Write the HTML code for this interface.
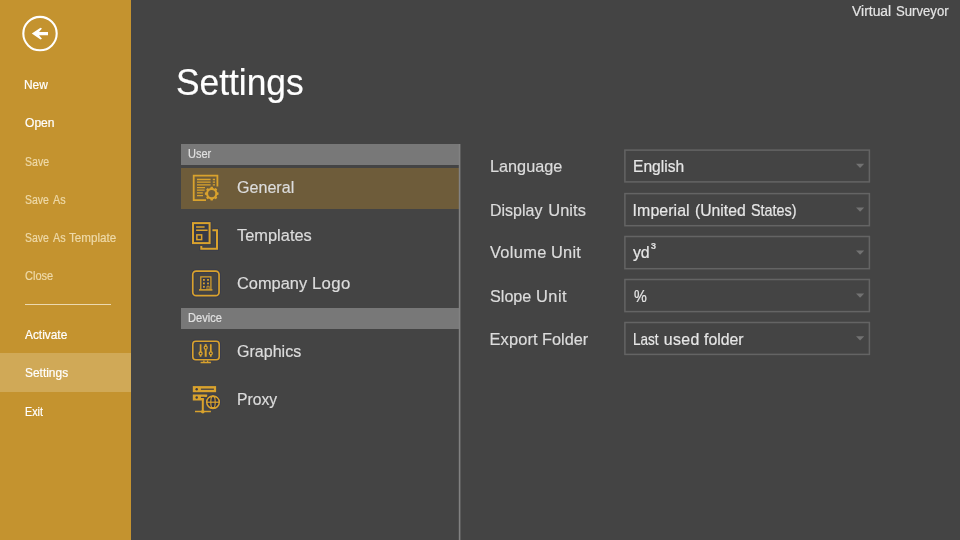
<!DOCTYPE html>
<html><head><meta charset="utf-8"><title>Settings</title>
<style>
html,body{margin:0;padding:0;}
body{width:960px;height:540px;overflow:hidden;background:#444444;position:relative;font-family:"Liberation Sans",sans-serif;color:#e6e6e6;}
.abs{position:absolute;}
#side{position:absolute;left:0;top:0;width:131px;height:540px;background:#c4932f;}
#selm{position:absolute;left:0;top:353px;width:131px;height:39px;background:#d0a957;}
#sep{position:absolute;left:25px;top:304px;width:86px;height:1px;background:#ecd9b0;}
.t{position:absolute;white-space:pre;height:20px;transform-origin:0 0;-webkit-text-stroke:0.2px currentColor;}
.t span{position:absolute;top:0;white-space:pre;transform-origin:0 0;}
.hdr{position:absolute;left:181px;width:279px;background:#787878;}
.sel{position:absolute;left:181px;top:168px;width:278px;height:41px;background:#6e5c3a;}
.t b{font-weight:normal;font-size:14.5px;line-height:0;position:relative;top:-5.2px;left:1.4px;-webkit-text-stroke:0.3px #e6e6e6}
#root{position:absolute;left:0;top:0;width:960px;height:540px;will-change:transform;}
</style></head><body><div id="root">
<div id="side"><div id="selm"></div><div id="sep"></div>
<svg class="abs" style="left:0;top:0" width="131" height="70" viewBox="0 0 131 70"><circle cx="40" cy="33.6" r="16.7" fill="none" stroke="#fff" stroke-width="2.1"/><path d="M31.8 33.6L40.5 27.8L42 28.5L39 31.95H48V35.25H39L42 38.7L40.5 39.4Z" fill="#fff"/></svg>
</div>
<div class="hdr" style="top:144px;height:21px"></div>
<div class="sel"></div>
<div class="hdr" style="top:308px;height:21px"></div>
<svg id="icons" class="abs" style="left:0;top:0" width="960" height="540" viewBox="0 0 960 540">
<g fill="none" stroke="#d9a22d">
<path d="M206 200.1H193.7V175.7H217.4V186.5" stroke-width="1.8"/>
<path d="M197 179.5H210.6M197 182.1H210.6M197 184.9H210.6M212.8 179.5H215M212.8 182.1H215M212.8 184.9H215M197 187.6H205M197 190.2H204.6M197 192.8H202.8M197 195.6H203" stroke-width="1.3"/>
</g>
<path d="M217.24 192.27 L218.52 192.52 L218.52 194.68 L217.24 194.93 L216.56 196.58 L217.28 197.66 L215.76 199.18 L214.68 198.46 L213.03 199.14 L212.78 200.42 L210.62 200.42 L210.37 199.14 L208.72 198.46 L207.64 199.18 L206.12 197.66 L206.84 196.58 L206.16 194.93 L204.88 194.68 L204.88 192.52 L206.16 192.27 L206.84 190.62 L206.12 189.54 L207.64 188.02 L208.72 188.74 L210.37 188.06 L210.62 186.78 L212.78 186.78 L213.03 188.06 L214.68 188.74 L215.76 188.02 L217.28 189.54 L216.56 190.62Z M215.30 193.60 A3.6 3.6 0 1 0 208.10 193.60 A3.6 3.6 0 1 0 215.30 193.60Z" fill="#d9a22d" fill-rule="evenodd"/>
<path d="M212.4 230.2H217V248.7H201.3V246" fill="none" stroke="#3a3c49" stroke-width="4"/>
<rect x="193" y="223.1" width="16.6" height="20" fill="none" stroke="#3a3c49" stroke-width="4"/>
<rect x="193" y="223.1" width="16.6" height="20" fill="#373a47" stroke="#d9a22d" stroke-width="2"/>
<path d="M212.4 230.2H217V248.7H201.3V246" fill="none" stroke="#d9a22d" stroke-width="2"/>
<path d="M196.1 227H204.6M196.1 230.2H207.6" fill="none" stroke="#d9a22d" stroke-width="1.5"/>
<rect x="196.85" y="234.85" width="4.8" height="4.8" fill="#373a47" stroke="#d9a22d" stroke-width="1.5"/>
<rect x="192.75" y="271.05" width="26.3" height="24.6" rx="3.4" fill="none" stroke="#3a3c49" stroke-width="3.7"/>
<rect x="192.75" y="271.05" width="26.3" height="24.6" rx="3.4" fill="none" stroke="#d9a22d" stroke-width="1.7"/>
<path d="M200.8 289.6V276.8H210.9V289.6" fill="#373a47" stroke="#d9a22d" stroke-width="1.2"/>
<path d="M199 289.9H212.4" fill="none" stroke="#d9a22d" stroke-width="1.5"/>
<g fill="#d9a22d"><rect x="203" y="279" width="1.8" height="1.8"/><rect x="207.1" y="279" width="1.8" height="1.8"/><rect x="203" y="282.5" width="1.8" height="1.8"/><rect x="207.1" y="282.5" width="1.8" height="1.8"/><rect x="203" y="285.9" width="1.8" height="1.8"/></g>
<path d="M207 289.5V286.2H209.1V289.5" fill="none" stroke="#d9a22d" stroke-width="0.9"/>
<rect x="192.8" y="341.3" width="26.4" height="18.4" rx="3" fill="none" stroke="#3a3c49" stroke-width="3.6"/>
<rect x="192.8" y="341.3" width="26.4" height="18.4" rx="3" fill="none" stroke="#d9a22d" stroke-width="1.6"/>
<path d="M203.9 360.5V362.4M207.6 360.5V362.4M200.6 362.5H210.9" fill="none" stroke="#d9a22d" stroke-width="1.3"/>
<path d="M200.6 344.2V356.8M210.8 344.2V356.8" fill="none" stroke="#d9a22d" stroke-width="1.7"/>
<path d="M205.7 344.2V356.8" fill="none" stroke="#d9a22d" stroke-width="2"/>
<g fill="#373a47" stroke="#d9a22d" stroke-width="1.3"><circle cx="200.6" cy="353.5" r="1.5"/><circle cx="205.7" cy="347.7" r="1.5"/><circle cx="210.8" cy="353.3" r="1.5"/></g>
<rect x="192.8" y="386.1" width="23.3" height="6.1" fill="#d9a22d"/>
<circle cx="196.7" cy="389.2" r="1.2" fill="#373a47"/><path d="M200.9 389.2H213.9" stroke="#373a47" stroke-width="1.2"/>
<path d="M192.8 394.4H207.2V397H203.9V400.4H192.8Z" fill="#d9a22d"/>
<circle cx="196.7" cy="397.5" r="1.2" fill="#373a47"/><path d="M200.9 397.4H204.6" stroke="#373a47" stroke-width="1.2"/>
<path d="M202.8 399V411.5" stroke="#d9a22d" stroke-width="2" fill="none"/><path d="M195 411.5H210.9" stroke="#d9a22d" stroke-width="1.5" fill="none"/><circle cx="202.8" cy="411.8" r="1.8" fill="#d9a22d"/>
<circle cx="213" cy="402.2" r="8" fill="#3b3d4a"/>
<circle cx="213" cy="402.2" r="6.3" fill="#2f3245" stroke="#d9a22d" stroke-width="1.5"/>
<g fill="none" stroke="#d9a22d"><ellipse cx="213" cy="402.2" rx="2.2" ry="6.3" stroke-width="1.15"/><path d="M206.7 402.2H219.3" stroke-width="1.25"/><path d="M209.6 396.8H216.4M209.6 407.6H216.4" stroke-width="1.1"/></g>
<rect x="624.9" y="150.1" width="244.5" height="31.8" fill="none" stroke="#646464" stroke-width="1.5"/>
<path d="M856 163.8H864.2L860.1 168.1Z" fill="#727272"/>
<rect x="624.9" y="193.6" width="244.5" height="32.1" fill="none" stroke="#646464" stroke-width="1.5"/>
<path d="M856 207.4H864.2L860.1 211.7Z" fill="#727272"/>
<rect x="624.9" y="236.5" width="244.5" height="32.2" fill="none" stroke="#646464" stroke-width="1.5"/>
<path d="M856 250.4H864.2L860.1 254.7Z" fill="#727272"/>
<rect x="624.9" y="279.5" width="244.5" height="32.1" fill="none" stroke="#646464" stroke-width="1.5"/>
<path d="M856 293.4H864.2L860.1 297.7Z" fill="#727272"/>
<rect x="624.9" y="322.5" width="244.5" height="31.9" fill="none" stroke="#646464" stroke-width="1.5"/>
<path d="M856 336.2H864.2L860.1 340.6Z" fill="#727272"/>
<rect x="458.8" y="144" width="1.6" height="396" fill="#828282"/>
</svg>
<div class="t" style="left:24.02px;top:74.77px;font-size:12.2px;line-height:20px;color:#fff;transform:scaleX(0.9797);">New</div>
<div class="t" style="left:24.75px;top:112.77px;font-size:12.2px;line-height:20px;color:#fff;transform:scaleX(0.9901);">Open</div>
<div class="t" style="left:24.75px;top:151.77px;font-size:12.2px;line-height:20px;color:#eed9a8;transform:scaleX(0.8660);">Save</div>
<div class="t" style="left:24.75px;top:189.77px;font-size:12.2px;line-height:20px;color:#eed9a8"><span style="left:0.00px;transform:scaleX(0.8607);">Save </span><span style="left:27.75px;transform:scaleX(0.8847);">As</span></div>
<div class="t" style="left:24.75px;top:227.77px;font-size:12.2px;line-height:20px;color:#eed9a8"><span style="left:0.00px;transform:scaleX(0.8571);">Save </span><span style="left:27.75px;transform:scaleX(0.8847);">As </span><span style="left:44.00px;transform:scaleX(0.9563);">Template</span></div>
<div class="t" style="left:24.75px;top:265.77px;font-size:12.2px;line-height:20px;color:#eed9a8;transform:scaleX(0.9050);">Close</div>
<div class="t" style="left:24.50px;top:324.77px;font-size:12.2px;line-height:20px;color:#fff;transform:scaleX(0.9753);">Activate</div>
<div class="t" style="left:24.50px;top:362.77px;font-size:12.2px;line-height:20px;color:#fff;transform:scaleX(0.9785);">Settings</div>
<div class="t" style="left:25.02px;top:401.77px;font-size:12.2px;line-height:20px;color:#fff;transform:scaleX(0.8831);">Exit</div>
<div class="t" style="left:176.03px;top:59.09px;font-size:36.4px;line-height:48px;color:#fff;transform:scaleX(0.9707);">Settings</div>
<div class="t" style="left:851.50px;top:1.15px;font-size:14px;line-height:20px;color:#e4e4e4"><span style="left:0.00px;transform:scaleX(0.9944);">Virtual </span><span style="left:44.10px;transform:scaleX(0.9386);">Surveyor</span></div>
<div class="t" style="left:188.20px;top:143.84px;font-size:12px;line-height:20px;color:#e0e0e0;transform:scaleX(0.9156);">User</div>
<div class="t" style="left:188.30px;top:307.84px;font-size:12px;line-height:20px;color:#e0e0e0;transform:scaleX(0.9242);">Device</div>
<div class="t" style="left:237.00px;top:178.18px;font-size:16.8px;line-height:20px;color:#dcdcdc;transform:scaleX(0.9581);">General</div>
<div class="t" style="left:236.60px;top:226.18px;font-size:16.8px;line-height:20px;color:#dcdcdc;transform:scaleX(0.9778);">Templates</div>
<div class="t" style="left:236.80px;top:274.18px;font-size:16.8px;line-height:20px;color:#dcdcdc"><span style="left:0.00px;transform:scaleX(0.9761);">Company </span><span style="left:75.10px;letter-spacing:0.334px;">Logo</span></div>
<div class="t" style="left:236.70px;top:342.18px;font-size:16.8px;line-height:20px;color:#dcdcdc;transform:scaleX(0.9557);">Graphics</div>
<div class="t" style="left:236.56px;top:390.18px;font-size:16.8px;line-height:20px;color:#dcdcdc;transform:scaleX(0.9364);">Proxy</div>
<div class="t" style="left:489.81px;top:156.32px;font-size:16.4px;line-height:20px;color:#dcdcdc;transform:scaleX(0.9915);">Language</div>
<div class="t" style="left:489.83px;top:200.32px;font-size:16.4px;line-height:20px;color:#dcdcdc"><span style="left:0.00px;transform:scaleX(0.9749);">Display </span><span style="left:58.37px;letter-spacing:0.113px;">Units</span></div>
<div class="t" style="left:490.00px;top:242.32px;font-size:16.4px;line-height:20px;color:#dcdcdc"><span style="left:0.00px;letter-spacing:0.339px;">Volume </span><span style="left:61.00px;letter-spacing:0.219px;">Unit</span></div>
<div class="t" style="left:490.00px;top:286.32px;font-size:16.4px;line-height:20px;color:#dcdcdc"><span style="left:0.00px;transform:scaleX(0.9867);">Slope </span><span style="left:46.00px;letter-spacing:0.469px;">Unit</span></div>
<div class="t" style="left:489.50px;top:329.32px;font-size:16.4px;line-height:20px;color:#dcdcdc"><span style="left:0.00px;letter-spacing:0.137px;">Export </span><span style="left:52.51px;transform:scaleX(0.9946);">Folder</span></div>
<div class="t" style="left:632.62px;top:157.49px;font-size:15.9px;line-height:20px;color:#e6e6e6;transform:scaleX(0.9805);">English</div>
<div class="t" style="left:632.60px;top:201.49px;font-size:15.9px;line-height:20px;color:#e6e6e6"><span style="left:0.00px;letter-spacing:0.073px;">Imperial </span><span style="left:62.70px;transform:scaleX(0.9903);">(United </span><span style="left:118.80px;transform:scaleX(0.9051);">States)</span></div>
<div class="t" style="left:633.50px;top:287.49px;font-size:15.9px;line-height:20px;color:#e6e6e6;transform:scaleX(0.9071);">%</div>
<div class="t" style="left:632.75px;top:330.49px;font-size:15.9px;line-height:20px;color:#e6e6e6"><span style="left:0.00px;transform:scaleX(0.8508);">Last </span><span style="left:30.95px;letter-spacing:0.426px;">used </span><span style="left:70.75px;transform:scaleX(0.9961);">folder</span></div>
<div class="t" style="left:632.9px;top:243.49px;font-size:15.9px;line-height:20px;letter-spacing:-0.1px;color:#e6e6e6">yd<b>³</b></div>
</div></body></html>
